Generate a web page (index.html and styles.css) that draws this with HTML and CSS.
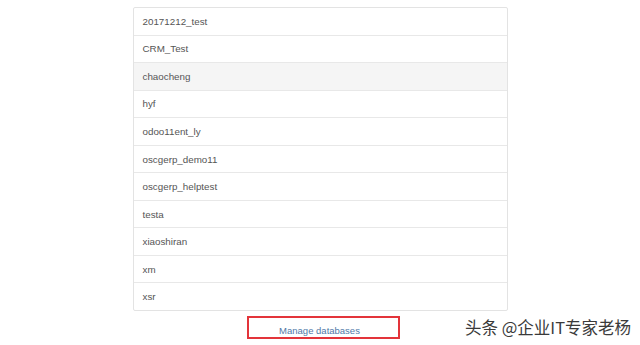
FILE: index.html
```html
<!DOCTYPE html>
<html>
<head>
<meta charset="utf-8">
<link rel="stylesheet" href="styles.css">
</head>
<body>
<div class="page">
  <div class="db-list">
    <a class="db-item">20171212_test</a>
    <a class="db-item">CRM_Test</a>
    <a class="db-item active">chaocheng</a>
    <a class="db-item">hyf</a>
    <a class="db-item">odoo11ent_ly</a>
    <a class="db-item">oscgerp_demo11</a>
    <a class="db-item">oscgerp_helptest</a>
    <a class="db-item">testa</a>
    <a class="db-item">xiaoshiran</a>
    <a class="db-item">xm</a>
    <a class="db-item">xsr</a>
  </div>
  <div class="manage-row">
    <a class="manage-link">Manage databases</a>
  </div>
</div>
<div class="watermark">头条 @企业IT专家老杨</div>
</body>
</html>
```
FILE: styles.css
```css
html, body {
  margin: 0;
  padding: 0;
  background: #ffffff;
  width: 640px;
  height: 345px;
  overflow: hidden;
  font-family: "Liberation Sans", Arial, sans-serif;
}
.page {
  padding-top: 7px;
}
.db-list {
  width: 373px;
  margin: 0 auto;
  border: 1px solid #e3e3e3;
  border-radius: 2px;
  display: flex;
  flex-direction: column;
}
.db-item {
  height: 26.55px;
  display: flex;
  align-items: center;
  padding: 0 9px;
  font-size: 9.8px;
  color: #555555;
  border-top: 1px solid #e8e8e8;
}
.db-item:first-child {
  border-top: none;
}
.db-item.active {
  background: #f5f5f5;
}
.manage-row {
  display: flex;
  margin-top: 5px;
  padding-left: 247px;
}
.manage-link {
  width: 141px;
  height: 19px;
  padding-right: 8px;
  border: 2px solid #e3343a;
  display: flex;
  justify-content: center;
  align-items: flex-end;
  font-size: 9.5px;
  color: #5079a8;
  line-height: 12px;
}
.watermark {
  position: absolute;
  left: 465px;
  top: 315px;
  font-family: "Noto Sans CJK SC", "Liberation Sans", sans-serif;
  font-size: 16.5px;
  color: #3a3a3a;
  text-shadow: 0 0 2px #ffffff;
  white-space: nowrap;
}
```
